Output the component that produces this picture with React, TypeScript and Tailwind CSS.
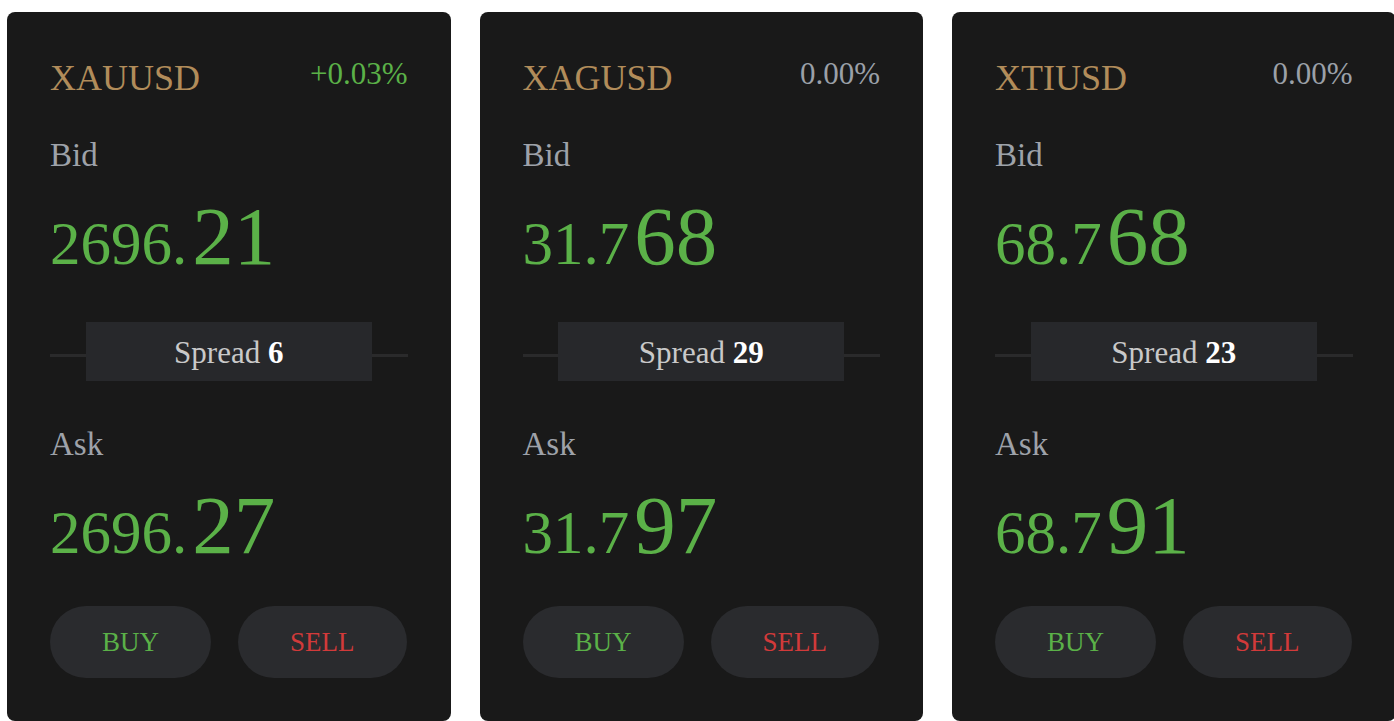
import React from "react";

interface Quote {
  symbol: string;
  change: string;
  changeUp: boolean;
  bid: [string, string];
  ask: [string, string];
  spread: number;
}

const quotes: Quote[] = [
  { symbol: "XAUUSD", change: "+0.03%", changeUp: true, bid: ["2696.", "21"], ask: ["2696.", "27"], spread: 6 },
  { symbol: "XAGUSD", change: "0.00%", changeUp: false, bid: ["31.7", "68"], ask: ["31.7", "97"], spread: 29 },
  { symbol: "XTIUSD", change: "0.00%", changeUp: false, bid: ["68.7", "68"], ask: ["68.7", "91"], spread: 23 },
];

const Price = ({ parts }: { parts: [string, string] }) => (
  <div className="leading-none text-[83px] text-[#5bb148] whitespace-nowrap">
    <span className="text-[61px] leading-none">{parts[0]}</span>
    <span className="ml-[5px]">{parts[1]}</span>
  </div>
);

const QuoteCard = ({ quote }: { quote: Quote }) => (
  <section className="w-[443.5px] shrink-0 h-[709px] bg-[#191919] rounded-[8px] px-[43px] pt-[47px]">
    <div className="flex justify-between items-start">
      <h2 className="text-[36px] leading-none text-[#b18c5a] mt-[1px]">{quote.symbol}</h2>
      <span
        className={`text-[31px] leading-none -mt-px ${
          quote.changeUp ? "text-[#5bb148]" : "text-[#9ba0a8]"
        }`}
      >
        {quote.change}
      </span>
    </div>

    <div className="mt-[43px] text-[33px] leading-none text-[#9ea2a9]">Bid</div>
    <div className="mt-[23px]">
      <Price parts={quote.bid} />
    </div>

    <div className="mt-[44px] flex items-center">
      <div className="flex-1 h-[3px] mt-[8px] bg-[#2a2a2b]" />
      <div className="w-[80%] h-[59px] pt-[3px] bg-[#27282b] flex items-center justify-center text-[31px] text-[#c9c9c9]">
        Spread&nbsp;<span className="text-white font-semibold">{quote.spread}</span>
      </div>
      <div className="flex-1 h-[3px] mt-[8px] bg-[#2a2a2b]" />
    </div>

    <div className="mt-[47px] text-[33px] leading-none text-[#9ea2a9]">Ask</div>
    <div className="mt-[23px]">
      <Price parts={quote.ask} />
    </div>

    <div className="mt-[39px] flex gap-[27px]">
      <button
        type="button"
        className="h-[72px] px-[52px] rounded-full bg-[#2a2b2e] text-[27px] text-[#5bb148]"
      >
        BUY
      </button>
      <button
        type="button"
        className="h-[72px] px-[52px] rounded-full bg-[#2a2b2e] text-[27px] text-[#d23a3a]"
      >
        SELL
      </button>
    </div>
  </section>
);

export default function App() {
  return (
    <div
      className="w-[1394px] h-[721px] overflow-hidden bg-white pl-[7px] pt-[12px] flex gap-[29px]"
      style={{ fontFamily: '"Liberation Serif", serif' }}
    >
      {quotes.map((q) => (
        <QuoteCard key={q.symbol} quote={q} />
      ))}
    </div>
  );
}
